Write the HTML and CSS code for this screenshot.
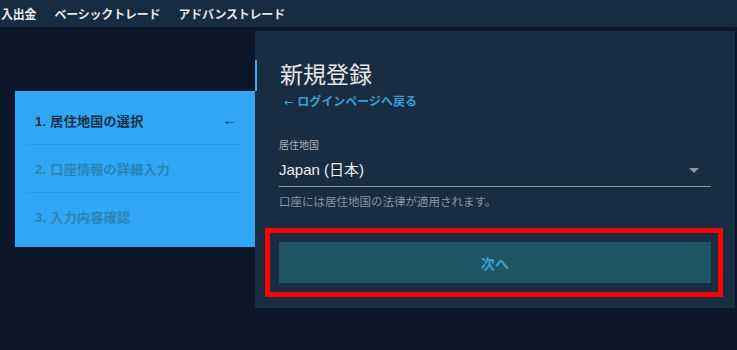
FILE: index.html
```html
<!DOCTYPE html>
<html lang="ja">
<head>
<meta charset="utf-8">
<link rel="stylesheet" href="styles.css">
</head>
<body>
<header class="nav">
  <span class="nav-item">入出金</span>
  <span class="nav-item">ベーシックトレード</span>
  <span class="nav-item">アドバンストレード</span>
</header>
<main class="main">
  <aside class="steps">
    <div class="step active"><span>1. 居住地国の選択</span><span class="arrow">←</span></div>
    <div class="step"><span>2. 口座情報の詳細入力</span></div>
    <div class="step"><span>3. 入力内容確認</span></div>
  </aside>
  <section class="card">
    <h1 class="title">新規登録</h1>
    <a class="back"><span class="back-arrow">←</span>ログインページへ戻る</a>
    <div class="field">
      <div class="label">居住地国</div>
      <div class="select">
        <span>Japan (日本)</span>
        <span class="caret"></span>
      </div>
      <div class="help">口座には居住地国の法律が適用されます。</div>
    </div>
    <button class="next">次へ</button>
    <div class="highlight"></div>
  </section>
</main>
</body>
</html>
```
FILE: styles.css
```css
* { box-sizing: border-box; }
html, body { margin: 0; padding: 0; }
body {
  background: #0b1628;
  font-family: "Liberation Sans", "Noto Sans CJK JP", sans-serif;
  width: 737px;
  height: 350px;
  overflow: hidden;
}
.nav {
  height: 27px;
  background: #172b41;
  display: flex;
  align-items: center;
  gap: 18px;
  padding-left: 1px;
}
.nav-item {
  color: #e6e9ec;
  font-size: 12px;
  font-weight: bold;
  letter-spacing: -0.2px;
}
.main {
  display: flex;
  align-items: flex-start;
  padding-left: 15px;
  margin-top: 4px;
}
.steps {
  width: 240px;
  margin-top: 60px;
  background: #30a6f5;
  padding: 5px 12px 7px;
}
.step {
  height: 48px;
  display: flex;
  align-items: center;
  justify-content: space-between;
  padding: 0 6px 0 8px;
  font-size: 13px;
  font-weight: bold;
  letter-spacing: 0.3px;
  color: #2885b3;
  border-top: 1px solid #2c98e2;
}
.step:first-child { border-top: none; }
.step.active { color: #16304a; }
.arrow { font-weight: normal; font-size: 14px; color: #16304a; }
.card {
  position: relative;
  width: 480px;
  background: #182c42;
  padding: 29px 24px 25px 24px;
}
.title {
  margin: 0 0 0 -24px;
  border-left: 2px solid #4aa8ea;
  padding-left: 23px;
  height: 31px;
  line-height: 31px;
  font-size: 23px;
  font-weight: normal;
  color: #e4e6e8;
}
.back {
  display: block;
  margin-top: 3px;
  padding-left: 5px;
  font-size: 12px;
  line-height: 16px;
  font-weight: bold;
  color: #3a9fd6;
}
.back-arrow {
  font-family: "DejaVu Sans", sans-serif;
  font-weight: normal;
  font-size: 11px;
  margin-right: 4px;
}
.field { margin-top: 28px; }
.label {
  font-size: 10px;
  line-height: 14px;
  color: #a9b2bb;
}
.select {
  display: flex;
  justify-content: space-between;
  align-items: center;
  padding: 7px 12px 6px 0;
  line-height: 20px;
  font-size: 15px;
  color: #eef0f2;
  border-bottom: 1px solid #8995a1;
}
.caret {
  width: 0;
  height: 0;
  border-left: 5px solid transparent;
  border-right: 5px solid transparent;
  border-top: 5px solid #8a96a2;
}
.help {
  margin-top: 8px;
  font-size: 11.5px;
  line-height: 14px;
  color: #8a96a2;
}
.next {
  display: block;
  width: 100%;
  margin-top: 33px;
  height: 41px;
  border: none;
  background: #1f5563;
  color: #3aa0d8;
  font-family: inherit;
  font-size: 14px;
  font-weight: bold;
}
.highlight {
  position: absolute;
  left: 10px;
  top: 197px;
  width: 458px;
  height: 69px;
  border: 5px solid #ff0000;
  pointer-events: none;
}
```
